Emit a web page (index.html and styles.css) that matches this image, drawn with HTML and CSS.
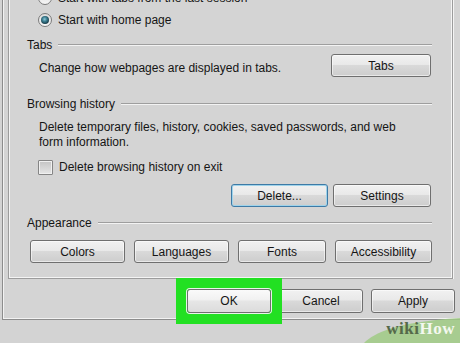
FILE: index.html
```html
<!DOCTYPE html>
<html lang="en">
<head>
    <meta charset="UTF-8">
    <title>Internet Options - General</title>
    <link rel="stylesheet" href="styles.css">
</head>
<body>
    <div class="dialog">
        <div class="group">
            <div class="startup">
                <label class="option"><span class="radio"></span>Start with tabs from the last session</label>
                <label class="option"><span class="radio checked"></span>Start with home page</label>
            </div>

            <div class="section-title"><span>Tabs</span></div>
            <div class="tabs-row">
                <p class="desc">Change how webpages are displayed in tabs.</p>
                <button class="btn btn-tabs">Tabs</button>
            </div>

            <div class="section-title"><span>Browsing history</span></div>
            <p class="desc history-desc">Delete temporary files, history, cookies, saved passwords, and web<br>form information.</p>
            <label class="option check-row"><span class="checkbox"></span>Delete browsing history on exit</label>
            <div class="history-buttons">
                <button class="btn btn-default">Delete...</button>
                <button class="btn btn-settings">Settings</button>
            </div>

            <div class="section-title"><span>Appearance</span></div>
            <div class="appearance-buttons">
                <button class="btn">Colors</button>
                <button class="btn">Languages</button>
                <button class="btn">Fonts</button>
                <button class="btn">Accessibility</button>
            </div>
        </div>

        <div class="footer">
            <span class="highlight"><button class="btn btn-ok">OK</button></span>
            <button class="btn">Cancel</button>
            <button class="btn">Apply</button>
        </div>
    </div>

    <div class="watermark">
        <svg width="100" height="30" viewBox="0 0 100 30">
            <path d="M4 30 C 14 20, 36 9, 100 5 L 100 30 Z" fill="#9fca84" opacity="0.85"/>
        </svg>
        <span class="wm-text"><span class="wm-wiki">wiki</span>How</span>
    </div>
</body>
</html>
```

FILE: styles.css
```css
body {
    margin: 0;
    width: 460px;
    height: 343px;
    overflow: hidden;
    position: relative;
    background: #d3d3d3;
    font-family: "Liberation Sans", Arial, sans-serif;
    font-size: 12px;
    color: #151515;
}

.dialog {
    margin-left: 2px;
    height: 332px;
    border-left: 1px solid #8c8c8c;
    border-bottom: 1px solid #8c8c8c;
    box-shadow: inset 1px 0 #f2f2f2, inset 0 -1px #f2f2f2;
    background: #d4d4d4;
}

.group {
    margin-left: 5px;
    width: 445px;
    height: 292px;
    box-sizing: border-box;
    border: 1px solid #9c9c9c;
    border-top: none;
    box-shadow: inset 1px 0 #f4f4f4, inset -1px 0 #f4f4f4, inset 0 -1px #f4f4f4, 1px 0 #f4f4f4;
    padding: 0 20px 0 18px;
}

.startup {
    margin-top: -13px;
}

.option {
    display: flex;
    align-items: center;
    height: 22px;
    padding-left: 11px;
}

.radio {
    width: 12px;
    height: 12px;
    margin-right: 6px;
    border: 1px solid #7b7b7b;
    border-radius: 50%;
    background: linear-gradient(#dcdcdc, #f6f6f6);
    position: relative;
}

.radio.checked::after {
    content: "";
    position: absolute;
    left: 2px;
    top: 2px;
    width: 8px;
    height: 8px;
    border-radius: 50%;
    background: radial-gradient(circle at 45% 40%, #8fc9d8 0, #3a7d90 35%, #173844 75%);
}

.section-title {
    display: flex;
    align-items: center;
    height: 20px;
    margin-top: 4px;
}

.section-title::after {
    content: "";
    flex: 1;
    height: 1px;
    margin-left: 6px;
    border-top: 1px solid #9e9e9e;
    background: #f3f3f3;
}

.tabs-row {
    display: flex;
    justify-content: space-between;
    margin-top: -1px;
    height: 23px;
}

.desc {
    margin: 0;
    padding-left: 12px;
    line-height: 15px;
}

.tabs-row .desc {
    padding-top: 7px;
}

.tabs-row + .section-title {
    margin-top: 17px;
}

.history-desc {
    margin-top: 6px;
}

.check-row {
    margin-top: 7px;
    height: 20px;
}

.checkbox {
    width: 13px;
    height: 13px;
    margin-right: 6px;
    border: 1px solid #858585;
    border-radius: 1px;
    background: linear-gradient(#c4c4c4, #e6e6e6);
    box-shadow: inset 0 0 0 1px #f0f0f0;
}

.history-buttons {
    display: flex;
    justify-content: flex-end;
    gap: 5px;
    margin-top: 7px;
    margin-right: 1px;
}

.history-buttons + .section-title {
    margin-top: 6px;
}

.btn {
    height: 23px;
    padding: 0;
    border: 1px solid #6f6f6f;
    border-radius: 3px;
    background: linear-gradient(#f1f1f1, #e9e9e9 45%, #d9d9d9 50%, #cdcdcd);
    box-shadow: inset 0 0 0 1px rgba(255, 255, 255, 0.55);
    font-family: inherit;
    font-size: inherit;
    color: #151515;
}

.btn-tabs {
    width: 100px;
    margin-right: 1px;
}

.btn-default {
    width: 97px;
    border-color: #3d7aa6;
    box-shadow: inset 0 0 0 1px #9fd3ea;
}

.btn-settings {
    width: 98px;
}

.appearance-buttons {
    display: grid;
    grid-template-columns: 95px 95px 88px 97px;
    justify-content: space-between;
    margin-top: 7px;
    padding-left: 3px;
}

.footer {
    display: flex;
    justify-content: flex-end;
    gap: 8px;
    margin-top: 10px;
    padding-right: 5px;
}

.footer .btn {
    width: 84px;
    height: 24px;
}

.highlight {
    display: flex;
    margin: -11px;
    padding: 11px;
    background: #22e022;
    position: relative;
    z-index: 1;
}

.btn-ok {
    background: linear-gradient(#fafafa, #f1f1f1 45%, #e6e6e6 50%, #dcdcdc);
    box-shadow: 0 0 0 1px #e8f5e8;
}

.watermark {
    position: absolute;
    right: 0;
    bottom: 0;
    width: 100px;
    height: 30px;
    z-index: 2;
}

.watermark svg {
    display: block;
}

.wm-text {
    position: absolute;
    right: 5px;
    bottom: 4px;
    font-family: "Liberation Serif", serif;
    font-weight: bold;
    font-size: 17px;
    letter-spacing: 0.5px;
    color: #f4f8ef;
}

.wm-wiki {
    color: #55694a;
}
```
